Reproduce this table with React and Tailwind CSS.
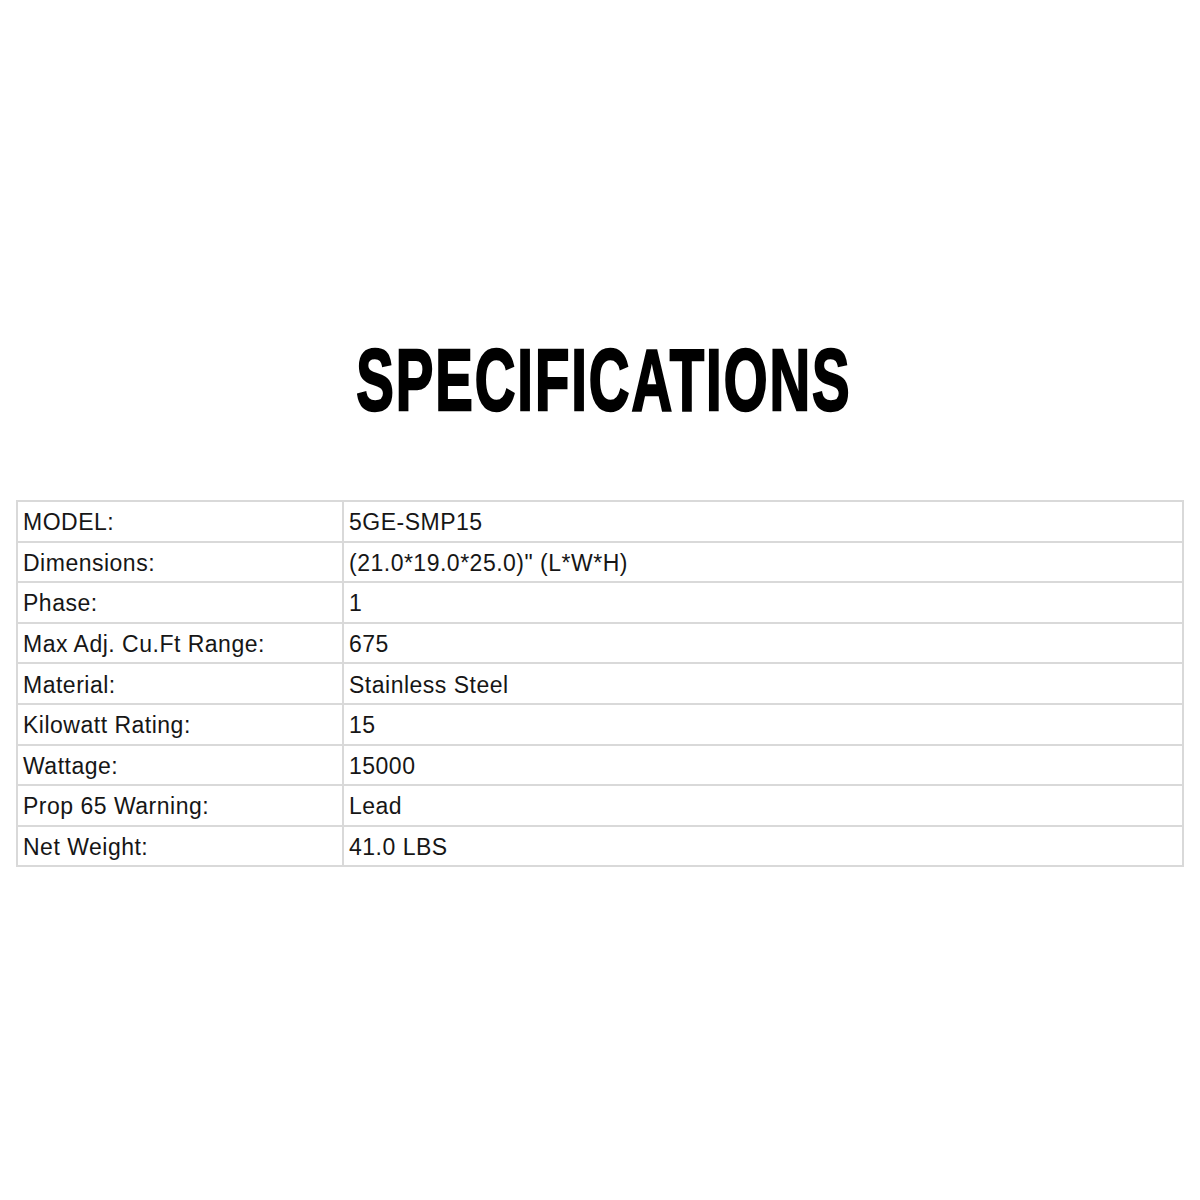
const specs = [
  ["MODEL:", "5GE-SMP15"],
  ["Dimensions:", '(21.0*19.0*25.0)" (L*W*H)'],
  ["Phase:", "1"],
  ["Max Adj. Cu.Ft Range:", "675"],
  ["Material:", "Stainless Steel"],
  ["Kilowatt Rating:", "15"],
  ["Wattage:", "15000"],
  ["Prop 65 Warning:", "Lead"],
  ["Net Weight:", "41.0 LBS"],
]

export default function App() {
  return (
    <div className="h-[1200px] w-[1200px] bg-white font-['Liberation_Sans',Arial,sans-serif]">
      <div className="flex justify-center pl-[8px] pt-[336px]">
        <h1 className="inline-block scale-x-[0.64] text-[88px] font-bold leading-none tracking-[3px] text-black [-webkit-text-stroke:2.5px_black]">
          SPECIFICATIONS
        </h1>
      </div>
      <div className="px-4 pt-[76px]">
        <table className="w-full border-collapse border-2 border-[#d9d9d9] text-[23px] tracking-[0.5px] text-[#161616]">
          <tbody>
            {specs.map(([label, value]) => (
              <tr key={label} className="h-[40.6px]">
                <td className="w-[326px] border-2 border-[#d9d9d9] px-[5px] pt-[3px] leading-none">{label}</td>
                <td className="border-2 border-[#d9d9d9] px-[5px] pt-[3px] leading-none">{value}</td>
              </tr>
            ))}
          </tbody>
        </table>
      </div>
    </div>
  )
}
